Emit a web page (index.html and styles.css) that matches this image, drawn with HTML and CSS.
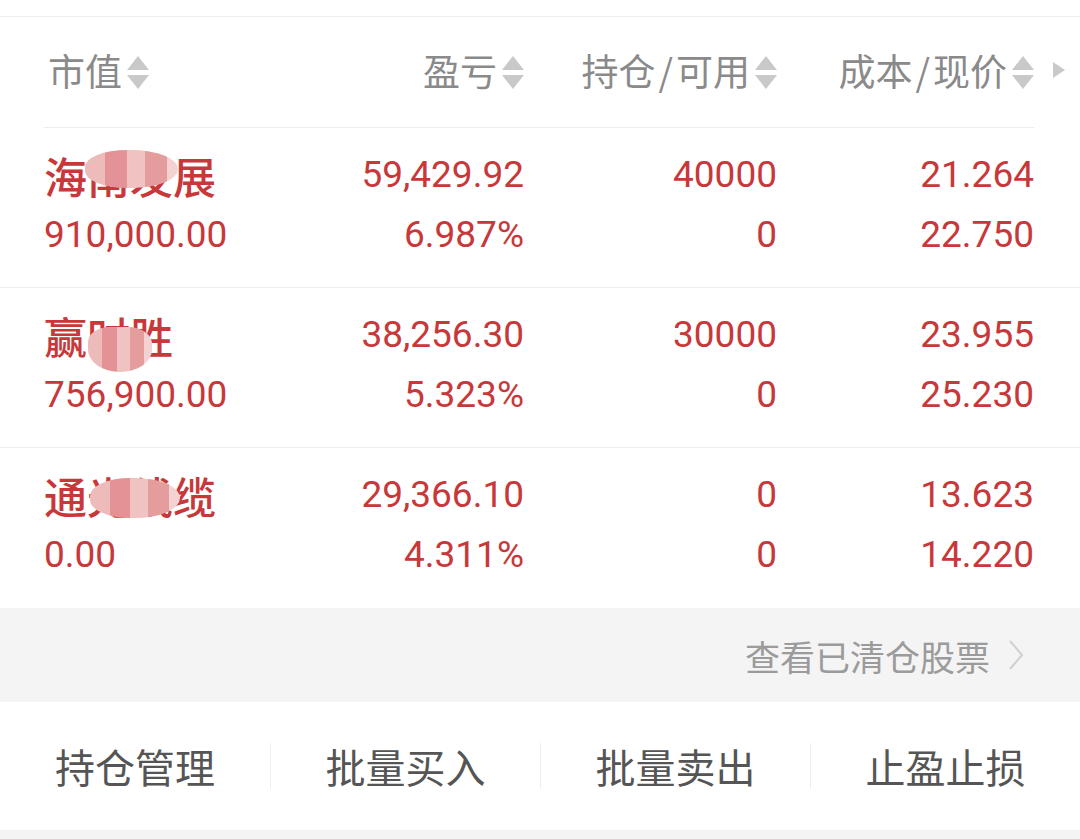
FILE: index.html
```html
<!DOCTYPE html>
<html lang="zh-CN">
<head>
    <meta charset="UTF-8">
    <meta name="viewport" content="width=device-width, initial-scale=1.0">
    <title>持仓</title>
    <link rel="stylesheet" href="styles.css">
</head>
<body>
    <div class="top-gap"></div>

    <!-- column titles -->
    <div class="table-head">
        <div class="head-cell left">市值<span class="sort"><i class="up"></i><i class="down"></i></span></div>
        <div class="head-cell">盈亏<span class="sort"><i class="up"></i><i class="down"></i></span></div>
        <div class="head-cell">持仓<span class="slash">/</span>可用<span class="sort"><i class="up"></i><i class="down"></i></span></div>
        <div class="head-cell">成本<span class="slash">/</span>现价<span class="sort"><i class="up"></i><i class="down"></i></span></div>
        <span class="more"></span>
    </div>

    <!-- holdings -->
    <div class="row">
        <div class="cell left">
            <div class="name">海南发展<span class="mask mask-a"></span></div>
            <div>910,000.00</div>
        </div>
        <div class="cell"><div>59,429.92</div><div>6.987%</div></div>
        <div class="cell"><div>40000</div><div>0</div></div>
        <div class="cell"><div>21.264</div><div>22.750</div></div>
    </div>
    <div class="row">
        <div class="cell left">
            <div class="name">赢时胜<span class="mask mask-b"></span></div>
            <div>756,900.00</div>
        </div>
        <div class="cell"><div>38,256.30</div><div>5.323%</div></div>
        <div class="cell"><div>30000</div><div>0</div></div>
        <div class="cell"><div>23.955</div><div>25.230</div></div>
    </div>
    <div class="row last">
        <div class="cell left">
            <div class="name">通光线缆<span class="mask mask-c"></span></div>
            <div>0.00</div>
        </div>
        <div class="cell"><div>29,366.10</div><div>4.311%</div></div>
        <div class="cell"><div>0</div><div>0</div></div>
        <div class="cell"><div>13.623</div><div>14.220</div></div>
    </div>

    <div class="cleared">
        <span>查看已清仓股票</span>
        <svg class="chevron" width="16" height="32" viewBox="0 0 16 32">
            <path d="M2 2 L14 16 L2 30" fill="none" stroke="#cfcfcf" stroke-width="2"/>
        </svg>
    </div>

    <div class="actions">
        <a href="#">持仓管理</a>
        <a href="#">批量买入</a>
        <a href="#">批量卖出</a>
        <a href="#">止盈止损</a>
    </div>
    <div class="bottom-strip"></div>
</body>
</html>
```

FILE: styles.css
```css
body {
    margin: 0;
    padding: 0;
    background-color: #ffffff;
    font-family: Roboto, "Noto Sans CJK SC", sans-serif;
}

.top-gap {
    height: 16px;
    border-bottom: 1px solid #ededed;
}

.table-head {
    position: relative;
    display: grid;
    grid-template-columns: 250px 230px 253px 257px;
    height: 110px;
    width: 990px;
    margin-left: 44px;
    border-bottom: 1px solid #ededed;
    align-items: center;
}

.head-cell {
    display: flex;
    justify-content: flex-end;
    align-items: center;
    font-family: "Noto Sans CJK SC", sans-serif;
    font-size: 37px;
    color: #8a8a8a;
    margin-top: -4px;
}

.head-cell.left {
    justify-content: flex-start;
    padding-left: 4px;
}

.slash {
    margin: 0 3px;
}

.sort {
    display: flex;
    flex-direction: column;
    gap: 5px;
    margin-left: 5px;
    margin-top: 4px;
}

.sort i {
    display: block;
    width: 0;
    height: 0;
    border-left: 11px solid transparent;
    border-right: 11px solid transparent;
}

.sort .up {
    border-bottom: 14px solid #c9c9c9;
}

.sort .down {
    border-top: 14px solid #c9c9c9;
}

.more {
    position: absolute;
    right: -31px;
    top: 50%;
    margin-top: -10px;
    width: 0;
    height: 0;
    border-top: 8px solid transparent;
    border-bottom: 8px solid transparent;
    border-left: 12px solid #c9c9c9;
}

.row {
    display: grid;
    grid-template-columns: 250px 230px 253px 257px;
    padding: 17px 0 22px 44px;
    border-bottom: 1px solid #ededed;
    font-size: 37px;
    line-height: 60px;
    color: #c8383a;
}

.row.last {
    border-bottom: none;
    padding-bottom: 23px;
}

.cell {
    text-align: right;
}

.cell.left {
    text-align: left;
}

.name {
    position: relative;
    font-family: "Noto Sans CJK SC", sans-serif;
    font-size: 43px;
    font-weight: 500;
}

.mask {
    position: absolute;
    border-radius: 45% 50% 50% 45%;
    background: linear-gradient(90deg, #eebbbb 0 22%, #e39395 22% 45%, #f0c2c2 45% 65%, #e59c9d 65% 88%, #f4d2d2 88%);
    filter: blur(0.6px);
}

.mask-a {
    left: 41px;
    top: 5px;
    width: 93px;
    height: 38px;
}

.mask-b {
    left: 44px;
    top: 22px;
    width: 64px;
    height: 45px;
    border-radius: 40% 45% 60% 60%;
}

.mask-c {
    left: 46px;
    top: 13px;
    width: 90px;
    height: 40px;
}

.cleared {
    display: flex;
    justify-content: flex-end;
    align-items: center;
    gap: 18px;
    height: 94px;
    padding-right: 56px;
    background-color: #f4f4f4;
    font-family: "Noto Sans CJK SC", sans-serif;
    font-size: 35px;
    color: #9b9b9b;
}

.chevron {
    display: block;
}

.actions {
    display: grid;
    grid-template-columns: repeat(4, 270px);
    height: 128px;
    align-items: center;
}

.actions a {
    display: flex;
    align-items: center;
    justify-content: center;
    height: 46px;
    font-family: "Noto Sans CJK SC", sans-serif;
    font-size: 40px;
    color: #555555;
    text-decoration: none;
    border-left: 1px solid #eeeeee;
}

.actions a:first-child {
    border-left: none;
}

.bottom-strip {
    height: 9px;
    background-color: #f4f4f4;
}
```
